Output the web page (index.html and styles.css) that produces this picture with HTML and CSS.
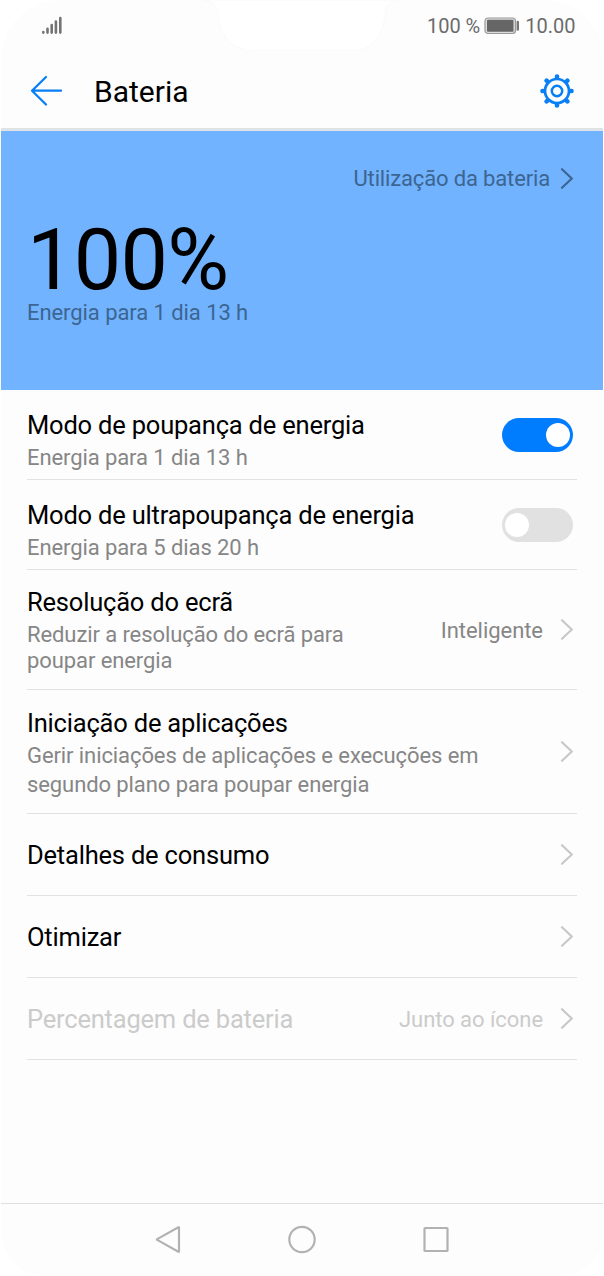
FILE: index.html
```html
<!DOCTYPE html>
<html lang="pt">
<head>
<meta charset="utf-8">
<title>Bateria</title>
<link rel="stylesheet" href="styles.css">
</head>
<body>
<svg width="0" height="0" class="defs"><symbol id="chevron" viewBox="0 0 14 22"><path d="M2 1.200 11.800 10.500 2 19.800" fill="none" stroke="currentColor" stroke-width="2.200" stroke-linecap="round" stroke-linejoin="round"/></symbol></svg>
<main class="phone">
  <svg class="notch" width="200" height="51" viewBox="0 0 200 51"><path d="M0 0C10 1 14 5 15 15C17 36 29 50.500 50 50.500H149C170 50.500 180 36 182 15C183 5 187 1 197 0Z" fill="#fff" stroke="#fafafa"/></svg>
  <header class="status">
    <svg width="22" height="20" viewBox="0 0 22 20" stroke="#747474" stroke-width="2.600" stroke-linecap="round"><path d="M2.300 16v.6M6.500 12.800v3.800M10.700 9v7.600M14.900 5.500v11.100M19.300 2v14.600"/></svg>
    <div class="status-right">
      <span class="pct">100 %</span>
      <svg width="36" height="18" viewBox="0 0 36 18"><rect x="1" y="1" width="30.500" height="15.500" rx="3" fill="#ddd" stroke="#999" stroke-width="1.200"/><rect x="3" y="2.800" width="26.500" height="12" rx="1" fill="#666"/><path d="M33.800 5v7.500" stroke="#777" stroke-width="2.400" stroke-linecap="round"/></svg>
      <span class="clock">10.00</span>
    </div>
  </header>
  <div class="appbar">
    <svg width="34" height="32" viewBox="0 0 34 32" fill="none" stroke="#087ff5" stroke-width="2.300" stroke-linecap="round" stroke-linejoin="round"><path d="M16 2 2 15.700 16 29.500M2 15.700H31"/></svg>
    <h1>Bateria</h1>
    <svg width="36" height="36" viewBox="-18 -18 36 36" fill="none" stroke="#087ff5"><circle r="12" stroke-width="2.700"/><circle r="5.200" stroke-width="2.500"/><g stroke-width="4.600" stroke-linecap="round"><path d="M0-14.500v.6M0 13.900v.6M-14.500 0h.6M13.900 0h.6M-10.400-10.400l.3.300M10.400-10.400l-.3.300M-10.400 10.400l.3-.3M10.400 10.400l-.3-.3"/></g></svg>
  </div>
  <section class="hero">
    <a class="usage"><span>Utilização da bateria</span><svg class="chevron"><use href="#chevron"/></svg></a>
    <div class="level">100%</div>
    <p class="estimate">Energia para 1 dia 13 h</p>
  </section>
  <section class="list">
    <div class="row toggle-row">
      <div class="copy"><h2>Modo de poupança de energia</h2><p>Energia para 1 dia 13 h</p></div>
      <span class="switch on"><i></i></span>
    </div>
    <div class="row toggle-row">
      <div class="copy"><h2>Modo de ultrapoupança de energia</h2><p>Energia para 5 dias 20 h</p></div>
      <span class="switch"><i></i></span>
    </div>
    <div class="row resolution">
      <div class="copy"><h2>Resolução do ecrã</h2><p>Reduzir a resolução do ecrã para<br>poupar energia</p></div>
      <span class="value">Inteligente</span><svg class="chevron"><use href="#chevron"/></svg>
    </div>
    <div class="row launch">
      <div class="copy"><h2>Iniciação de aplicações</h2><p>Gerir iniciações de aplicações e execuções em<br>segundo plano para poupar energia</p></div>
      <svg class="chevron"><use href="#chevron"/></svg>
    </div>
    <div class="row single"><h2>Detalhes de consumo</h2><svg class="chevron"><use href="#chevron"/></svg></div>
    <div class="row single"><h2>Otimizar</h2><svg class="chevron"><use href="#chevron"/></svg></div>
    <div class="row single disabled"><h2>Percentagem de bateria</h2><span class="value">Junto ao ícone</span><svg class="chevron"><use href="#chevron"/></svg></div>
  </section>
  <nav class="navbar">
    <svg width="30" height="30" viewBox="0 0 30 30"><path d="M26 2.500v24q0 .5-.6.300L4.200 14.900q-.6-.4 0-.8L25.400 2.200q.6-.2.600.3Z"/></svg>
    <svg width="30" height="30" viewBox="0 0 30 30"><circle cx="15" cy="14.500" r="12.700"/></svg>
    <svg width="30" height="30" viewBox="0 0 30 30"><rect x="3.500" y="3" width="23" height="23" rx=".6"/></svg>
  </nav>
</main>
</body>
</html>
```
FILE: styles.css
```css
* { box-sizing: border-box; }
body { margin: 0; background: #fff; font-family: Roboto, "Liberation Sans", sans-serif; color: #000; }
h1, h2, p { margin: 0; font-weight: 400; white-space: nowrap; }
svg { display: block; flex: none; }
.defs { position: absolute; }
.phone { position: relative; width: 602px; height: 1276px; margin-left: 1px; display: flex; flex-direction: column; background: #fdfdfd; border-radius: 60px 60px 44px 44px; overflow: hidden; }
.notch { position: absolute; left: 202px; top: 0; }
.status { height: 50px; padding: 2px 27.5px 0 40px; display: flex; align-items: center; justify-content: space-between; color: #6b6b6b; font-size: 20px; }
.status-right { display: flex; align-items: center; }
.pct { margin-right: 4px; }
.clock { margin-left: 5px; }
.appbar { height: 81px; padding: 3px 28px 0 29px; display: flex; align-items: center; border-bottom: 3.5px solid #e0e3e6; }
h1 { margin: 3px auto 0 30px; font-size: 30px; line-height: 36px; }
.hero { height: 259px; padding: 35px 26px 0; background: #71b3ff; color: #3c6591; font-size: 22px; line-height: 26px; letter-spacing: -.07px; }
.usage { display: flex; justify-content: flex-end; align-items: center; letter-spacing: -.15px; }
.usage .chevron { margin-left: 10px; color: #3c6591; }
.level { margin-top: 30px; font-size: 84.5px; line-height: 78px; letter-spacing: -.7px; color: #000; }
.chevron { width: 14px; height: 22px; margin-right: 3px; color: #c8c8c8; }
.list { margin: 0 26px; }
.row { display: flex; align-items: center; border-bottom: 1px solid #e2e2e2; }
.copy { align-self: flex-start; margin-right: auto; }
h2 { font-size: 25.5px; line-height: 30px; letter-spacing: -.2px; }
.copy p { margin-top: 5px; font-size: 22px; line-height: 26px; letter-spacing: -.09px; color: #868686; }
.toggle-row { height: 90px; }
.toggle-row .copy { padding-top: 20px; }
.resolution { height: 120px; }
.resolution .copy { padding-top: 17px; }
.launch { height: 124px; }
.launch .copy { padding-top: 18px; }
.launch .copy p { margin-top: 4px; line-height: 28.5px; }
.single { height: 82px; }
.single h2 { margin: 1px auto 0 0; }
.value { margin: 2px 17px 0 0; font-size: 22px; line-height: 26px; letter-spacing: -.05px; color: #868686; }
.single .value { margin-top: 3px; }
.disabled, .disabled .value { color: #cbcbcb; }
.switch { width: 70.5px; height: 34px; margin: 0 4.5px 0 0; padding: 5px 3px; border-radius: 17px; background: #e1e1e1; display: flex; }
.switch i { width: 24px; height: 24px; border-radius: 50%; background: #fff; }
.switch.on { background: #007dff; justify-content: flex-end; }
.navbar { height: 73px; margin-top: auto; border-top: 1px solid #e0e0e0; display: flex; justify-content: center; align-items: center; gap: 104px; }
.navbar svg { fill: none; stroke: #b2b2b2; stroke-width: 2.2; stroke-linejoin: round; }
```
